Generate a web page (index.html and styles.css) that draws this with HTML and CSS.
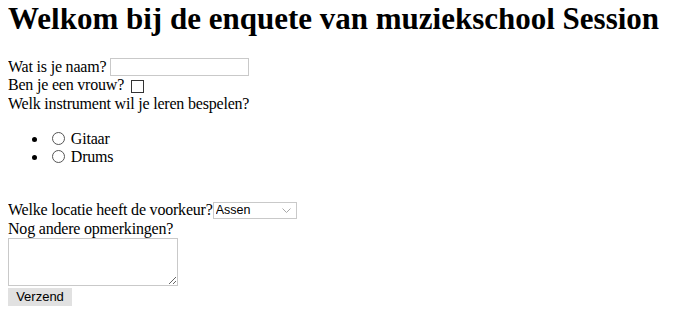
FILE: index.html
```html
<!DOCTYPE html>
<html lang="nl">
<head>
<meta charset="utf-8">
<title>Enquete</title>
<link rel="stylesheet" href="styles.css">
</head>
<body>
<h1 class="title">Welkom bij de enquete van muziekschool Session</h1>
<form class="survey">
  <label class="row">Wat is je naam?<input class="name" type="text"></label>
  <label class="row">Ben je een vrouw?<input class="check" type="checkbox"></label>
  <div class="row">Welk instrument wil je leren bespelen?</div>
  <ul class="choices">
    <li><input class="radio" type="radio" name="instr"> Gitaar</li>
    <li><input class="radio" type="radio" name="instr"> Drums</li>
  </ul>
  <label class="row">Welke locatie heeft de voorkeur?<select class="loc"><option>Assen</option></select></label>
  <div class="row">Nog andere opmerkingen?</div>
  <textarea class="notes"></textarea>
  <div class="actions"><input class="send" type="submit" value="Verzend"></div>
</form>
</body>
</html>
```
FILE: styles.css
```css
html, body {
  background: #fff;
}
body {
  margin: 8px;
  font-family: "Liberation Serif", "Times New Roman", serif;
  font-size: 16px;
  line-height: 18.4px;
  letter-spacing: -0.2px;
  color: #000;
}
.title {
  font-size: 31px;
  line-height: 36px;
  letter-spacing: 0;
  margin: -7.5px 0 21.5px;
  font-weight: bold;
}
.survey {
  margin: 0;
  display: flex;
  flex-direction: column;
  align-items: flex-start;
}
.row {
  display: flex;
  align-items: center;
  height: 18.4px;
  white-space: nowrap;
}
.name {
  box-sizing: border-box;
  width: 139px;
  height: 18px;
  border: 1px solid #c9c9c9;
  padding: 0;
  margin: 0 0 0 4px;
}
.check {
  appearance: none;
  box-sizing: border-box;
  width: 13px;
  height: 13px;
  border: 1px solid #333;
  background: #fff;
  margin: 1px 0 0 7px;
}
.choices {
  margin: 16.8px 0 34.4px;
  padding-left: 40px;
}
.choices li {
  height: 18.4px;
}
.radio {
  appearance: none;
  box-sizing: border-box;
  width: 13px;
  height: 13px;
  border: 1px solid #555;
  border-radius: 50%;
  background: #fff;
  margin: 0 2px 0 4px;
  vertical-align: -1px;
}
.loc {
  appearance: none;
  box-sizing: border-box;
  width: 84px;
  height: 17px;
  font-family: "Liberation Sans", Arial, sans-serif;
  font-size: 12.5px;
  letter-spacing: 0;
  color: #000;
  border: 1px solid #c9c9c9;
  border-radius: 0;
  background: #fff url("data:image/svg+xml;utf8,<svg xmlns='http://www.w3.org/2000/svg' width='9' height='5' viewBox='0 0 9 5'><path d='M0.5 0.5 L4.5 4.5 L8.5 0.5' fill='none' stroke='%23a8a8a8' stroke-width='1'/></svg>") no-repeat right 5px center;
  margin: 0;
  padding: 0 0 0 2px;
}
.notes {
  box-sizing: border-box;
  width: 170px;
  height: 48px;
  border: 1px solid #c9c9c9;
  margin: 0;
  resize: both;
}
.actions {
  display: flex;
  margin-top: 2px;
}
.send {
  box-sizing: border-box;
  width: 64px;
  height: 18px;
  font-family: "Liberation Sans", Arial, sans-serif;
  font-size: 13px;
  letter-spacing: 0;
  color: #000;
  background: #e1e1e1;
  border: 1px solid #e1e1e1;
  border-radius: 0;
  padding: 0;
  margin: 0;
}
```
